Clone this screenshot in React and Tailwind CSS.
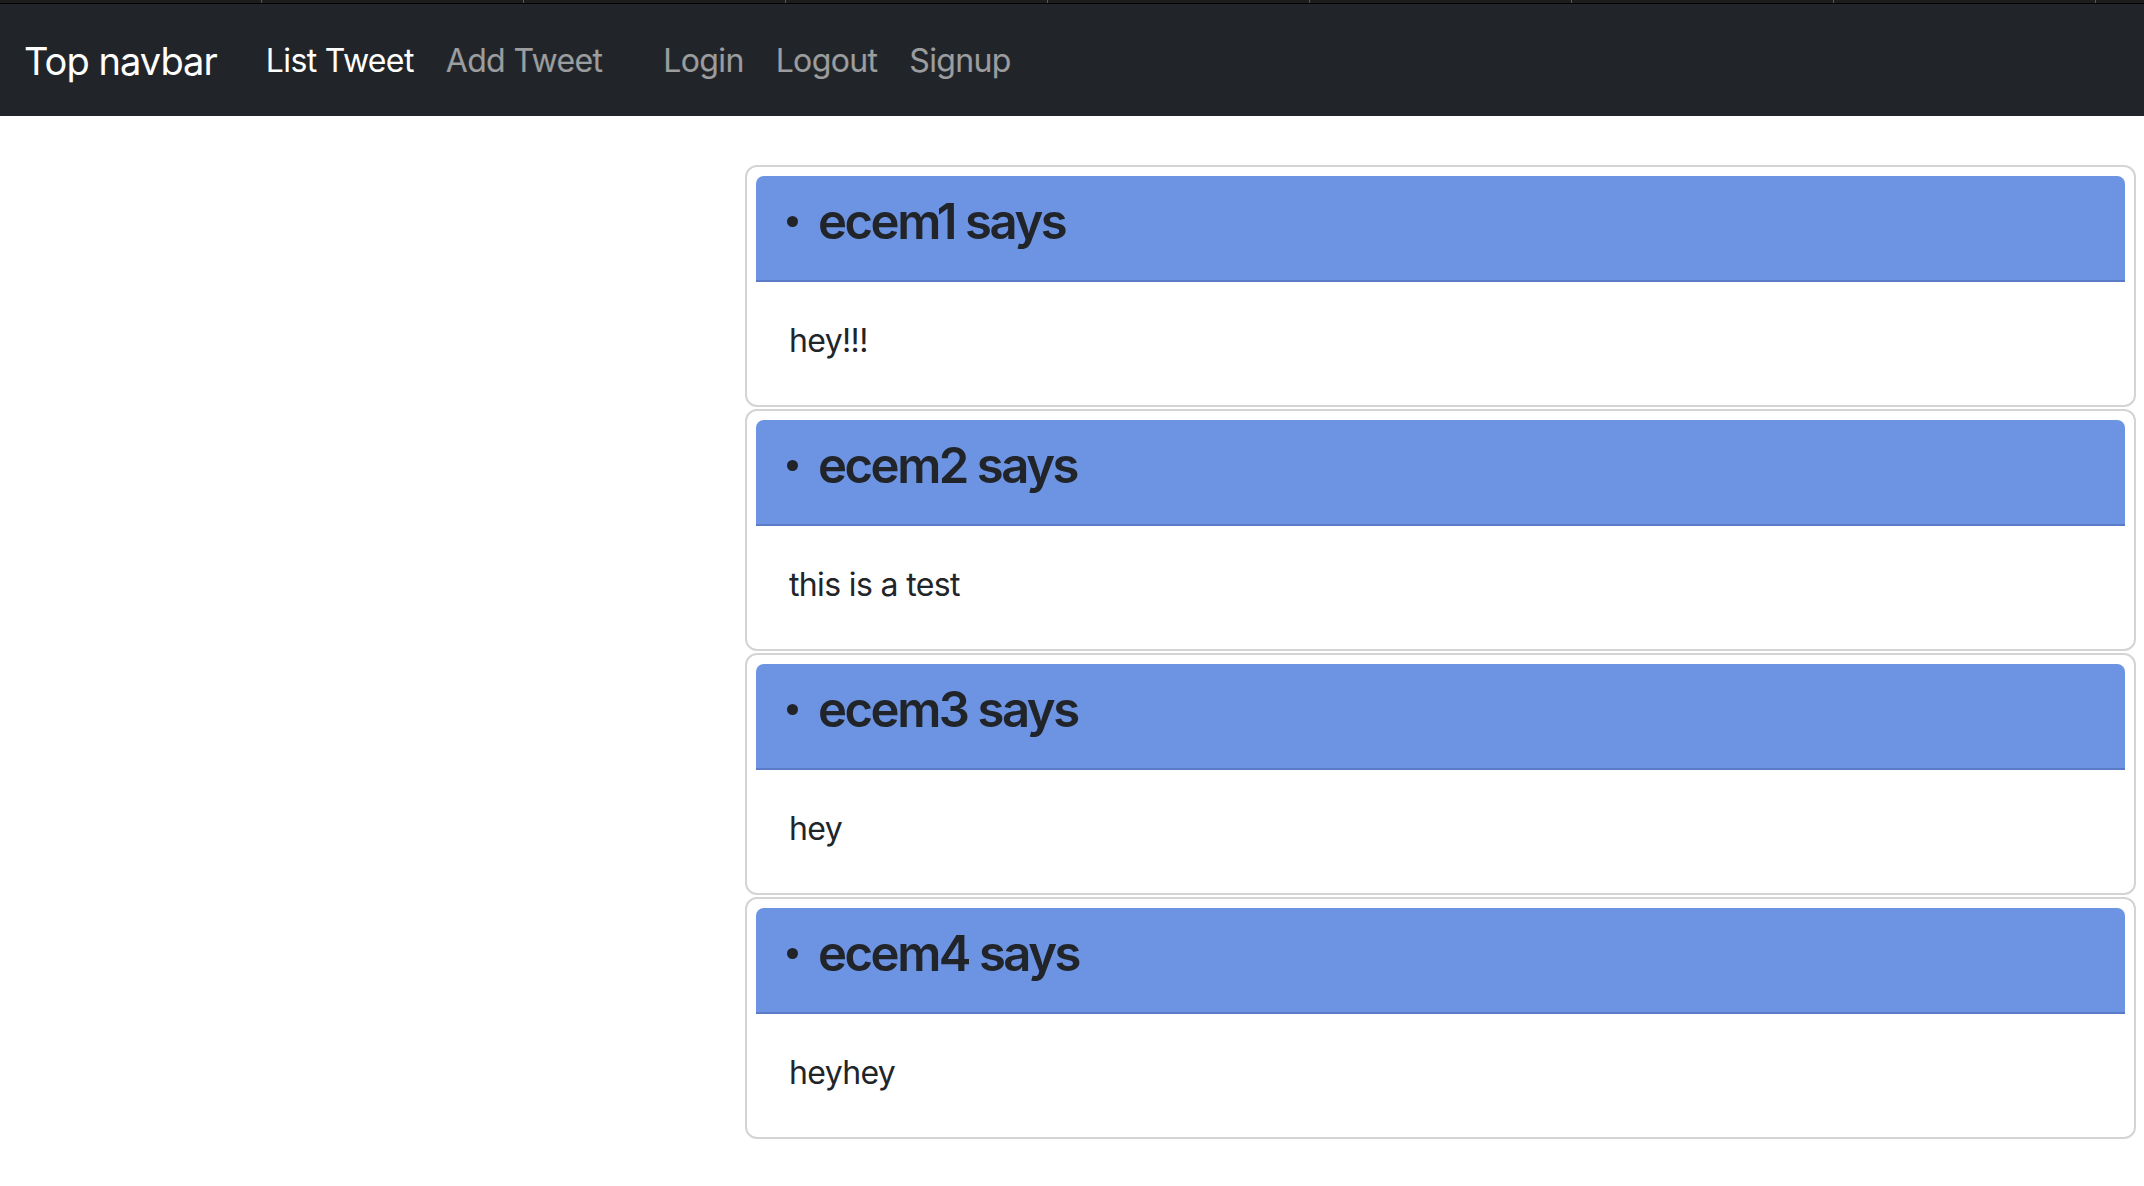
const tweets = [
  { user: 'ecem1', text: 'hey!!!' },
  { user: 'ecem2', text: 'this is a test' },
  { user: 'ecem3', text: 'hey' },
  { user: 'ecem4', text: 'heyhey' },
];

const ticks = Array.from({ length: 9 });

const TweetCard = ({ user, text }) => (
  <div className="rounded-[12px] border-2 border-[#d4d4d4] bg-white p-[9px] pb-0">
    <div className="flex h-[106px] items-center rounded-t-[8px] border-b-2 border-[#5a7bc6] bg-[#6d93e3] pb-[14px] pl-[31px]">
      <span className="mr-[20px] h-[11px] w-[11px] rounded-full bg-[#212529]" />
      <h3 className="text-[49px] font-semibold leading-none tracking-[-0.05em] text-[#212529]">{user} says</h3>
    </div>
    <div className="flex h-[123px] items-center pb-[5px] pl-[33px] text-[32px] tracking-[-0.02em] text-[#212529]">
      {text}
    </div>
  </div>
);

export default function App() {
  return (
    <div className="min-h-screen bg-white" style={{ fontFamily: 'Inter, "Noto Sans", sans-serif' }}>
      {/* window strip */}
      <div className="flex h-[4px] overflow-hidden border-b border-black bg-[#1d1d1d]">
        {ticks.map((_, i) => (
          <div key={i} className="h-full w-[262px] shrink-0 border-r border-[#5a5a5a]" />
        ))}
      </div>

      {/* Navbar */}
      <nav className="flex h-[112px] items-center bg-[#212529] pl-[24px] pt-[2px]">
        <span className="mr-[33px] text-[38px] tracking-[-0.025em] text-white">Top navbar</span>
        <div className="flex items-center text-[32px] tracking-[-0.02em]">
          <a className="px-[16px] text-white">List Tweet</a>
          <a className="px-[16px] text-white/55">Add Tweet</a>
        </div>
        <div className="ml-[29px] flex items-center text-[32px] tracking-[-0.02em]">
          <a className="px-[16px] text-white/55">Login</a>
          <a className="px-[16px] text-white/55">Logout</a>
          <a className="px-[16px] text-white/55">Signup</a>
        </div>
      </nav>

      {/* Tweets */}
      <div className="pl-[745px] pr-[8px] pt-[49px]">
        <div className="flex flex-col gap-[2px]">
          {tweets.map((t) => (
            <TweetCard key={t.user} user={t.user} text={t.text} />
          ))}
        </div>
      </div>
    </div>
  );
}
